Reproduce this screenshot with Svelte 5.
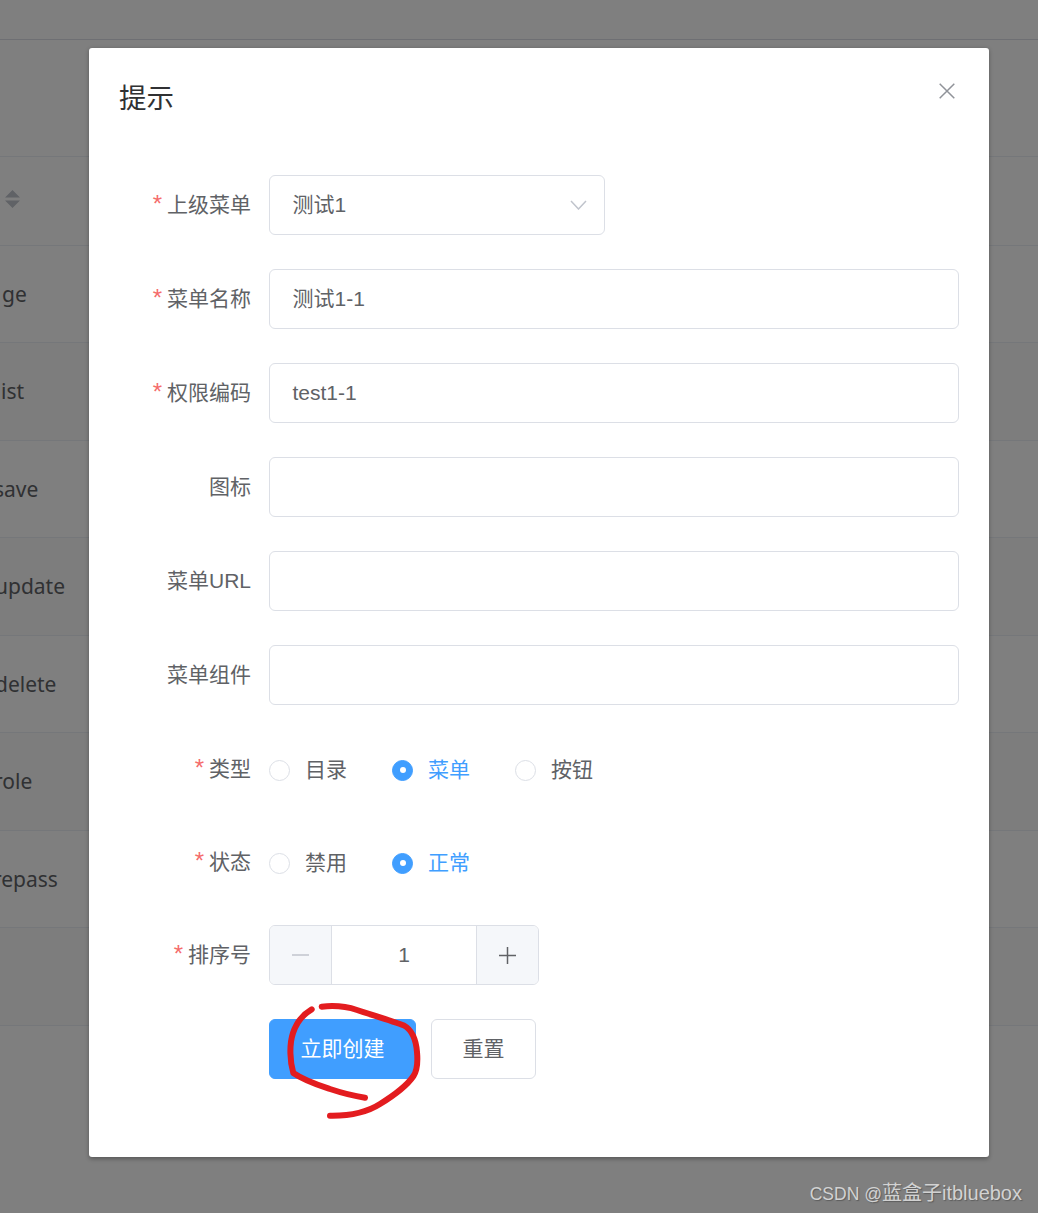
<script>
  const rows = [
    { text: 'ge', x: 2, striped: false },
    { text: 'ist', x: 1, striped: true },
    { text: 'save', x: -6, striped: false },
    { text: 'update', x: -5, striped: true },
    { text: 'delete', x: -5, striped: false },
    { text: 'role', x: -6, striped: true },
    { text: 'repass', x: -7, striped: false },
    { text: '', x: 0, striped: true }
  ];
  const inputs = [
    { label: '菜单名称', value: '测试1-1', required: true },
    { label: '权限编码', value: 'test1-1', required: true },
    { label: '图标', value: '', required: false },
    { label: '菜单URL', value: '', required: false },
    { label: '菜单组件', value: '', required: false }
  ];
  const radios = [
    { label: '类型', options: ['目录', '菜单', '按钮'], checked: 1 },
    { label: '状态', options: ['禁用', '正常'], checked: 1 }
  ];
</script>

<div class="page">
  <div class="table">
    <div class="topbar"></div>
    <div class="spacer"></div>
    <div class="head">
      <span class="carets">
        <svg width="15" height="18" viewBox="0 0 15 18"><path d="M7.5 0 15 7.5H0zM0 10.5h15L7.5 18z" fill="#c0c4cc"/></svg>
      </span>
    </div>
    {#each rows as row}
      <div class="row" class:striped={row.striped}>
        <span style="margin-left:{row.x}px">{row.text}</span>
      </div>
    {/each}
  </div>

  <div class="overlay">
    <div class="dialog">
      <header class="dialog-head">
        <h2>提示</h2>
        <svg class="close" width="16" height="16" viewBox="0 0 16 16"><path d="M.7.7l14.6 14.6M15.3.7.7 15.3" stroke="#909399" stroke-width="1.5" fill="none"/></svg>
      </header>

      <form class="form">
        <div class="item">
          <div class="label"><i>*</i>上级菜单</div>
          <div class="control select">
            <span>测试1</span>
            <svg width="17" height="10" viewBox="0 0 17 10"><path d="M1 1l7.5 8L16 1" stroke="#c0c4cc" stroke-width="1.5" fill="none"/></svg>
          </div>
        </div>

        {#each inputs as field}
          <div class="item">
            <div class="label">{#if field.required}<i>*</i>{/if}{field.label}</div>
            <div class="control wide"><span>{field.value}</span></div>
          </div>
        {/each}

        {#each radios as group}
          <div class="item radio-item">
            <div class="label"><i>*</i>{group.label}</div>
            <div class="radios">
              {#each group.options as option, i}
                <div class="radio" class:on={i === group.checked}>
                  <span class="dot"></span>
                  <span>{option}</span>
                </div>
              {/each}
            </div>
          </div>
        {/each}

        <div class="item">
          <div class="label"><i>*</i>排序号</div>
          <div class="number">
            <span class="step">
              <svg width="17" height="2" viewBox="0 0 17 2"><path d="M0 1h17" stroke="#c0c4cc" stroke-width="1.5"/></svg>
            </span>
            <span class="num">1</span>
            <span class="step plus">
              <svg width="17" height="17" viewBox="0 0 17 17"><path d="M0 8.5h17M8.5 0v17" stroke="#606266" stroke-width="1.5"/></svg>
            </span>
          </div>
        </div>

        <div class="item last">
          <div class="label"></div>
          <button type="button" class="btn primary">立即创建</button>
          <button type="button" class="btn">重置</button>
        </div>
      </form>
    </div>
  </div>

  <svg class="scribble" width="1038" height="1213" viewBox="0 0 1038 1213">
    <path d="M311.7 1009.3C302 1015 296 1024 293 1033C289 1045 290 1062 293.3 1073C305 1081 318 1085 330 1089C342 1093 354 1096 365 1097.7" />
    <path d="M321.7 1006.7C332 1005.5 345 1006 357 1010C372 1015 392 1021 404 1025.5C412 1030 416 1040 417 1052C418 1063 417.5 1070 413.5 1076C406 1087 393 1096 380 1104C366 1113 348 1116 330 1115.7" />
  </svg>

  <div class="mark"><span class="csdn">CSDN @</span>蓝盒子itbluebox</div>
</div>

<style>
  :global(body) {
    margin: 0;
    background: #fff;
    font-family: "Liberation Sans", "Noto Sans CJK SC", sans-serif;
  }
  .page {
    position: relative;
    width: 1038px;
    height: 1213px;
    overflow: hidden;
    background: #fff;
  }
  .table {
    color: #606266;
    font: 21px/30px "Noto Sans", "Noto Sans CJK SC", sans-serif;
  }
  .topbar {
    height: 39px;
    border-bottom: 1px solid #dcdfe6;
  }
  .spacer {
    height: 116px;
    border-bottom: 1px solid #ebeef5;
  }
  .head {
    height: 87.9px;
    display: flex;
    align-items: center;
    padding-left: 5px;
    border-bottom: 1px solid #ebeef5;
  }
  .carets {
    display: flex;
    margin-top: -3px;
  }
  .row {
    height: 95.5px;
    padding-bottom: 1px;
    display: flex;
    align-items: center;
    border-bottom: 1px solid #ebeef5;
    white-space: nowrap;
  }
  .striped {
    background: #fafafa;
  }
  .overlay {
    position: absolute;
    inset: 0;
    background: rgba(0, 0, 0, 0.5);
    padding: 48px 49px 0 89px;
    box-sizing: border-box;
  }
  .dialog {
    width: 900px;
    height: 1109px;
    background: #fff;
    border-radius: 3px;
    box-shadow: 0 1.5px 4.5px rgba(0, 0, 0, 0.3);
  }
  .dialog-head {
    position: relative;
    padding: 29px 30px 0;
    height: 127px;
    box-sizing: border-box;
  }
  h2 {
    margin: 0;
    font-size: 27.5px;
    line-height: 38px;
    font-weight: 400;
    color: #303133;
    font-family: "Noto Sans CJK SC", sans-serif;
  }
  .close {
    position: absolute;
    top: 35px;
    right: 34px;
  }
  .form {
    padding-right: 30px;
    font-size: 21px;
    line-height: 30px;
    color: #606266;
  }
  .item {
    display: flex;
    height: 60px;
    margin-bottom: 34px;
  }
  .radio-item {
    height: 59px;
  }
  .last {
    margin-bottom: 0;
  }
  .label {
    width: 162px;
    flex: none;
    text-align: right;
    padding-right: 18px;
    line-height: 60px;
    height: 60px;
    white-space: nowrap;
  }
  .label i {
    font-style: normal;
    font-size: 24px;
    line-height: 0;
    color: #f56c6c;
    margin-right: 5px;
  }
  .control {
    box-sizing: border-box;
    height: 60px;
    border: 1.5px solid #dcdfe6;
    border-radius: 6px;
    padding: 0 22.5px;
    display: flex;
    align-items: center;
    justify-content: space-between;
  }
  .select {
    width: 336px;
    padding-right: 17px;
  }
  .wide {
    width: 690px;
  }
  .radios {
    display: flex;
    gap: 45px;
    padding-top: 2px;
    height: 58px;
    line-height: 58px;
  }
  .radio {
    display: flex;
    align-items: center;
    gap: 15px;
  }
  .dot {
    box-sizing: border-box;
    width: 21px;
    height: 21px;
    border: 1.5px solid #dcdfe6;
    border-radius: 50%;
    background: #fff;
    display: flex;
    align-items: center;
    justify-content: center;
  }
  .on {
    color: #409eff;
  }
  .on .dot {
    border-color: #409eff;
    background: #409eff;
  }
  .on .dot::after {
    content: "";
    width: 6px;
    height: 6px;
    border-radius: 50%;
    background: #fff;
  }
  .number {
    box-sizing: border-box;
    width: 270px;
    height: 60px;
    border: 1.5px solid #dcdfe6;
    border-radius: 6px;
    display: flex;
    overflow: hidden;
  }
  .step {
    width: 62px;
    flex: none;
    background: #f5f7fa;
    display: flex;
    align-items: center;
    justify-content: center;
    border-right: 1.5px solid #dcdfe6;
    box-sizing: border-box;
  }
  .plus {
    border-right: 0;
    border-left: 1.5px solid #dcdfe6;
  }
  .num {
    flex: 1;
    text-align: center;
    line-height: 57px;
  }
  .btn {
    box-sizing: border-box;
    height: 60px;
    width: 105px;
    margin: 0 15px 0 0;
    padding: 0;
    background: #fff;
    border: 1.5px solid #dcdfe6;
    border-radius: 6px;
    color: #606266;
    font: inherit;
    font-size: 21px;
    line-height: 30px;
  }
  .primary {
    width: 147px;
    background: #409eff;
    border-color: #409eff;
    color: #fff;
  }
  .scribble {
    position: absolute;
    inset: 0;
    fill: none;
    stroke: #e31c1f;
    stroke-width: 6;
    stroke-linecap: round;
    stroke-linejoin: round;
  }
  .mark {
    position: absolute;
    right: 16px;
    top: 1181px;
    font-size: 20px;
    line-height: 24px;
    color: #d2d2d2;
    text-shadow: 1px 1px 1px rgba(60, 60, 60, 0.5);
    white-space: nowrap;
  }
  .csdn {
    font-size: 17.5px;
  }
</style>
